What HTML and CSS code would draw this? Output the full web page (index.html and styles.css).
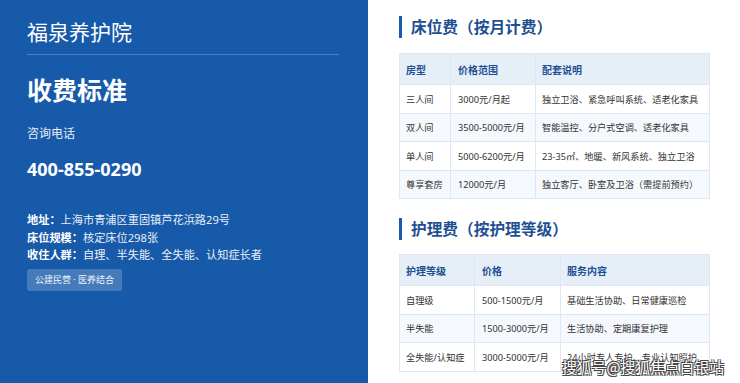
FILE: index.html
```html
<!DOCTYPE html>
<html lang="zh">
<head>
<meta charset="utf-8">
<link rel="stylesheet" href="styles.css">
</head>
<body>
<div class="page">
  <aside class="side">
    <div class="brand">福泉养护院</div>
    <div class="rule"></div>
    <h1 class="title">收费标准</h1>
    <div class="label">咨询电话</div>
    <div class="phone">400-855-0290</div>
    <div class="info">
      <p><b>地址：</b>上海市青浦区重固镇芦花浜路29号</p>
      <p><b>床位规模：</b>核定床位298张</p>
      <p><b>收住人群：</b>自理、半失能、全失能、认知症长者</p>
    </div>
    <span class="badge">公建民营 · 医养结合</span>
  </aside>
  <main class="main">
    <h2 class="sec">床位费（按月计费）</h2>
    <table class="tbl t1">
      <thead><tr><th>房型</th><th>价格范围</th><th>配套说明</th></tr></thead>
      <tbody>
        <tr><td>三人间</td><td>3000元/月起</td><td>独立卫浴、紧急呼叫系统、适老化家具</td></tr>
        <tr><td>双人间</td><td>3500-5000元/月</td><td>智能温控、分户式空调、适老化家具</td></tr>
        <tr><td>单人间</td><td>5000-6200元/月</td><td>23-35㎡、地暖、新风系统、独立卫浴</td></tr>
        <tr><td>尊享套房</td><td>12000元/月</td><td>独立客厅、卧室及卫浴（需提前预约）</td></tr>
      </tbody>
    </table>
    <h2 class="sec sec2">护理费（按护理等级）</h2>
    <table class="tbl t2">
      <thead><tr><th>护理等级</th><th>价格</th><th>服务内容</th></tr></thead>
      <tbody>
        <tr><td>自理级</td><td>500-1500元/月</td><td>基础生活协助、日常健康巡检</td></tr>
        <tr><td>半失能</td><td>1500-3000元/月</td><td>生活协助、定期康复护理</td></tr>
        <tr><td>全失能/认知症</td><td>3000-5000元/月</td><td>24小时专人专护、专业认知照护</td></tr>
      </tbody>
    </table>
  </main>
  <div class="watermark">搜狐号@搜狐焦点白银站</div>
</div>
</body>
</html>
```
FILE: styles.css
```css
* { box-sizing: border-box; }
html, body { margin: 0; padding: 0; }
body {
  font-family: "Noto Sans", "Noto Sans CJK SC", sans-serif;
  background: #fff;
  width: 740px;
  height: 383px;
  overflow: hidden;
}
.page {
  position: relative;
  display: flex;
  width: 740px;
  height: 383px;
}
.side {
  width: 368px;
  flex: none;
  background: #175aa9;
  color: #fff;
  padding: 16px 29px 0 27px;
  display: flex;
  flex-direction: column;
  align-items: flex-start;
}
.brand {
  font-size: 21px;
  line-height: 32px;
  font-weight: 400;
}
.rule {
  align-self: stretch;
  height: 1px;
  background: rgba(255,255,255,0.22);
  margin-top: 6px;
}
.title {
  margin: 18px 0 0;
  font-size: 25px;
  line-height: 34px;
  font-weight: 700;
}
.label {
  margin-top: 17px;
  font-size: 12px;
  line-height: 20px;
  color: #e8eef8;
}
.phone {
  margin-top: 12px;
  font-size: 18px;
  line-height: 26px;
  font-weight: 700;
}
.info {
  margin-top: 29px;
  font-size: 11.2px;
  line-height: 17.5px;
}
.info p { margin: 0; color: #e9eff8; }
.info b { color: #fff; font-weight: 700; }
.badge {
  margin-top: 5px;
  background: rgba(255,255,255,0.2);
  border-radius: 2px;
  font-size: 9px;
  line-height: 22px;
  padding: 0 8px;
  color: #f0f4fb;
}
.main {
  flex: 1;
  padding: 16px 30px 0 31px;
}
.sec {
  margin: 0;
  border-left: 3px solid #1a5aab;
  padding-left: 9px;
  font-size: 15.7px;
  line-height: 22px;
  font-weight: 700;
  color: #1d4f92;
}
.sec2 { margin-top: 19px; }
.tbl {
  margin-top: 15px;
  width: 311px;
  border-collapse: collapse;
  font-size: 9.2px;
  color: #333;
  table-layout: fixed;
}
.t2 { margin-top: 14px; }
.tbl th, .tbl td {
  border: 1px solid #dde8f4;
  text-align: left;
  padding: 0 6px;
  white-space: nowrap;
}
.tbl td:nth-child(2), .tbl th:nth-child(2) { padding-left: 7px; }
.tbl th {
  height: 31px;
  background: #e6eff8;
  color: #1d4f92;
  font-size: 10px;
  font-weight: 700;
}
.tbl td { height: 28.5px; }
.tbl tbody tr:nth-child(even) td { background: #f5f9fd; }
.t1 th:nth-child(1) { width: 51px; }
.t1 th:nth-child(2) { width: 85px; }
.t2 th:nth-child(1) { width: 75px; }
.t2 th:nth-child(2) { width: 86px; }
.watermark {
  position: absolute;
  left: 562px;
  top: 356px;
  white-space: nowrap;
  font-family: "Noto Sans CJK SC", sans-serif;
  font-size: 14.8px;
  line-height: 22px;
  color: #fff;
  text-shadow: 1px 1px 0 #444, -1px -1px 0 #444, 1px -1px 0 #444, -1px 1px 0 #444;
}
```
